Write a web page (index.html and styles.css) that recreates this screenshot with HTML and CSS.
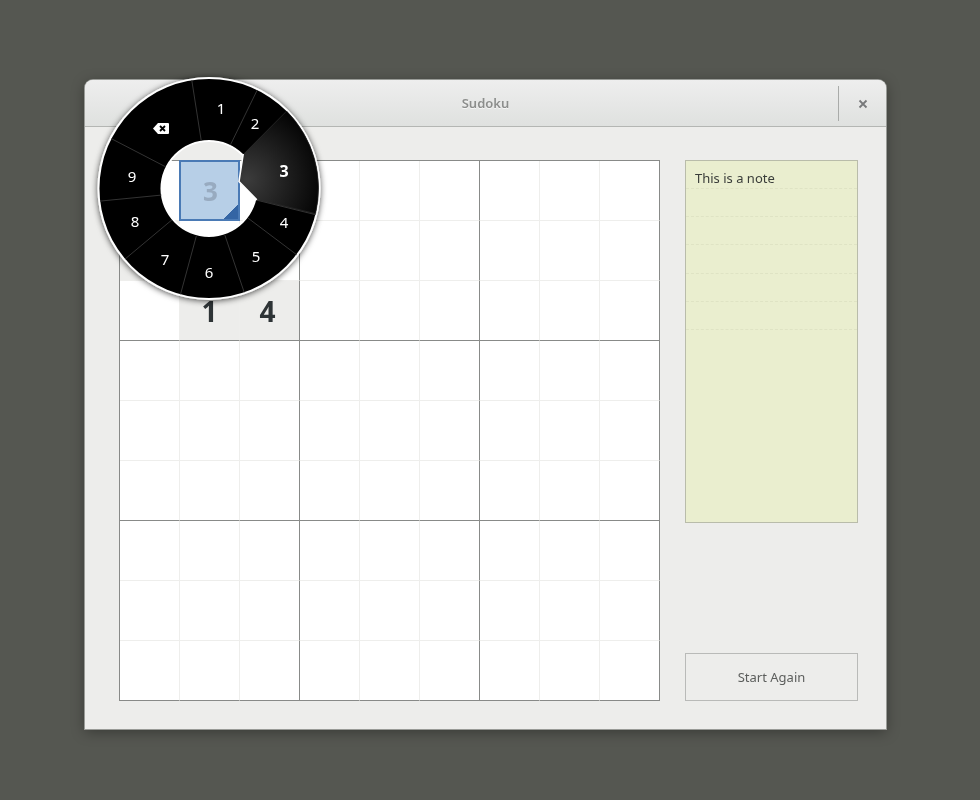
FILE: index.html
```html
<!DOCTYPE html>
<html lang="en">
<head>
<meta charset="utf-8">
<title>Sudoku</title>
<link rel="stylesheet" href="styles.css">
</head>
<body>
<div class="window">
  <header class="titlebar">
    <div class="title">Sudoku</div>
    <div class="controls">
      <span class="sep"></span>
      <svg class="close" width="10" height="10" viewBox="0 0 10 10"><path d="M1.5 1.5l7 7M8.5 1.5l-7 7" stroke="#77797a" stroke-width="1.8" fill="none"/></svg>
    </div>
  </header>
  <main class="content">
    <div class="board">
      <div class="c"></div><div class="c"></div><div class="c"></div><div class="c"></div><div class="c"></div><div class="c"></div><div class="c"></div><div class="c"></div><div class="c"></div>
      <div class="c hl"></div><div class="c"></div><div class="c"></div><div class="c"></div><div class="c"></div><div class="c"></div><div class="c"></div><div class="c"></div><div class="c"></div>
      <div class="c"></div><div class="c hl">1</div><div class="c hl shift">4</div><div class="c"></div><div class="c"></div><div class="c"></div><div class="c"></div><div class="c"></div><div class="c"></div>
      <div class="c"></div><div class="c"></div><div class="c"></div><div class="c"></div><div class="c"></div><div class="c"></div><div class="c"></div><div class="c"></div><div class="c"></div>
      <div class="c"></div><div class="c"></div><div class="c"></div><div class="c"></div><div class="c"></div><div class="c"></div><div class="c"></div><div class="c"></div><div class="c"></div>
      <div class="c"></div><div class="c"></div><div class="c"></div><div class="c"></div><div class="c"></div><div class="c"></div><div class="c"></div><div class="c"></div><div class="c"></div>
      <div class="c"></div><div class="c"></div><div class="c"></div><div class="c"></div><div class="c"></div><div class="c"></div><div class="c"></div><div class="c"></div><div class="c"></div>
      <div class="c"></div><div class="c"></div><div class="c"></div><div class="c"></div><div class="c"></div><div class="c"></div><div class="c"></div><div class="c"></div><div class="c"></div>
      <div class="c"></div><div class="c"></div><div class="c"></div><div class="c"></div><div class="c"></div><div class="c"></div><div class="c"></div><div class="c"></div><div class="c"></div>
    </div>
    <aside class="side">
      <div class="note">
        <div class="note-line">This is a note</div>
        <div class="note-line"></div>
        <div class="note-line"></div>
        <div class="note-line tall"></div>
        <div class="note-line"></div>
        <div class="note-line"></div>
      </div>
      <button class="again" type="button">Start Again</button>
    </aside>
  </main>
</div>

<div class="wheel">
  <div class="selected">3</div>
  <svg class="wheel-svg" width="240" height="240" viewBox="0 0 240 240">
    <defs>
      <radialGradient id="sel" gradientUnits="userSpaceOnUse" cx="38" cy="-9" r="82">
        <stop offset="0" stop-color="#3c3c3c"/>
        <stop offset="1" stop-color="#000"/>
      </radialGradient>
      <filter id="sh" x="-10%" y="-10%" width="120%" height="120%">
        <feDropShadow dx="0" dy="1" stdDeviation="3" flood-color="#000" flood-opacity=".7"/>
      </filter>
    </defs>
    <g transform="translate(120 119.5)">
      <path filter="url(#sh)" fill-rule="evenodd" fill="#fff" d="M0 -111.5A111.5 111.5 0 1 1 0 111.5A111.5 111.5 0 1 1 0 -111.5ZM0 -75A75 75 0 1 0 0 75A75 75 0 1 0 0 -75Z"/>
      <circle r="47.5" fill="none" stroke="#fff" stroke-width="2"/>
      <path fill-rule="evenodd" fill="#000" d="M0 -109.5A109.5 109.5 0 1 1 0 109.5A109.5 109.5 0 1 1 0 -109.5ZM0 -48.5A48.5 48.5 0 1 0 0 48.5A48.5 48.5 0 1 0 0 -48.5Z"/>
      <g stroke="#333" stroke-width="1">
        <path d="M-7.8 -48L-17.2 -108.2"/>
        <path d="M21.5 -43.8L48.2 -98.4"/>
        <path d="M47.5 11.6L106.7 26.2"/>
        <path d="M39 29.6L87.6 66.2"/>
        <path d="M15.8 46.4L35.2 103.8"/>
        <path d="M-12.6 47.3L-28.5 105.8"/>
        <path d="M-37 31.3L-84 70.6"/>
        <path d="M-47.6 6.6L-109 12.6"/>
        <path d="M-43.2 -21.6L-97.6 -49.8"/>
      </g>
      <path fill="url(#sel)" stroke="#333" stroke-width=".6" d="M34.5 -34.2L77.6 -77.4A109.5 109.5 0 0 1 106.6 25.2L47.5 11L30 -7Z"/>
      <path fill="none" stroke="#fff" stroke-width="1.6" d="M34.2 -34.5L30 -7L47.8 11.4"/>
    </g>
  </svg>
  <span class="seg s1">1</span>
  <span class="seg s2">2</span>
  <span class="seg s3">3</span>
  <span class="seg s4">4</span>
  <span class="seg s5">5</span>
  <span class="seg s6">6</span>
  <span class="seg s7">7</span>
  <span class="seg s8">8</span>
  <span class="seg s9">9</span>
  <svg class="bs" width="16" height="11" viewBox="0 0 16 11"><path fill="#fff" d="M5 0H15A1 1 0 0 1 16 1V10A1 1 0 0 1 15 11H5L0 5.5Z"/><path stroke="#000" stroke-width="1.8" fill="none" d="M7 3l5 5M12 3l-5 5"/></svg>
</div>
</body>
</html>
```

FILE: styles.css
```css
* { box-sizing: border-box; }
html, body { margin: 0; height: 800px; overflow: hidden; }
body {
  background: #555751;
  font-family: "Noto Sans", sans-serif;
  font-size: 13px;
  padding: 80px 94px 71px 85px;
  position: relative;
}
.window {
  width: 801px;
  height: 649px;
  background: #ededeb;
  border-radius: 8px 8px 0 0;
  box-shadow: 0 0 0 1px #999b97, 0 3px 14px rgba(0,0,0,.35);
  display: flex;
  flex-direction: column;
  will-change: transform;
}
.titlebar {
  height: 47px;
  flex: none;
  border-bottom: 1px solid #b4b6b3;
  border-radius: 8px 8px 0 0;
  background: linear-gradient(#eeeeee, #dfe1df);
  display: flex;
  align-items: center;
  justify-content: center;
  position: relative;
}
.title { color: #8c8e8c; font-weight: 600; font-size: 13px; text-shadow: 0 1px 0 #f6f6f6; }
.controls {
  position: absolute;
  right: 0; top: 6px; bottom: 5px;
  width: 48px;
  display: flex;
  align-items: center;
}
.sep { width: 1px; height: 35px; background: #a9aba9; }
.close { margin-left: 19px; }
.content {
  flex: 1;
  display: flex;
  padding: 33px 28px 28px 34px;
  gap: 25px;
}
.board {
  width: 541px;
  height: 541px;
  flex: none;
  border: 1px solid #888a88;
  border-width: 1px 0 0 1px;
  background: #fff;
  display: grid;
  grid-template-columns: repeat(9, 60px);
  grid-template-rows: repeat(9, 60px);
}
.c {
  border-right: 1px solid #eeeeec;
  border-bottom: 1px solid #eeeeec;
  display: flex;
  align-items: center;
  justify-content: center;
  font-size: 28px;
  font-weight: 700;
  color: #2e3436;
}
.c.hl { background: #ededeb; }
.c.shift { padding-right: 4px; }
.c:nth-child(3n) { border-right-color: #888a88; }
.c:nth-child(n+19):nth-child(-n+27),
.c:nth-child(n+46):nth-child(-n+54),
.c:nth-child(n+73) { border-bottom-color: #888a88; }
.side {
  flex: 1;
  display: flex;
  flex-direction: column;
  justify-content: space-between;
}
.note {
  height: 363px;
  border: 1px solid #b9bcaa;
  background: #eaeecf;
  color: #3a3d3a;
}
.note-line {
  height: 28px;
  line-height: 35px;
  padding-left: 9px;
  border-bottom: 1px dashed #dfe3c4;
}
.note-line.tall { height: 29px; }
.again {
  height: 48px;
  border: 1px solid #b9bab8;
  background: #ededeb;
  color: #5c5e5c;
  font: inherit;
  padding: 0;
}
.wheel {
  position: absolute;
  left: 89px;
  top: 69px;
  width: 240px;
  height: 240px;
  will-change: transform;
}
.wheel-svg { display: block; position: relative; }
.seg {
  position: absolute;
  width: 20px;
  margin-left: -10px;
  line-height: 20px;
  margin-top: -10px;
  text-align: center;
  color: #fff;
  font-size: 15px;
}
.s1 { left: 132px; top: 39px; }
.s2 { left: 166px; top: 54px; }
.s3 { left: 195px; top: 102px; font-weight: 700; font-size: 16px; }
.s4 { left: 195px; top: 153px; }
.s5 { left: 167px; top: 187px; }
.s6 { left: 120px; top: 203px; }
.s7 { left: 76px; top: 190px; }
.s8 { left: 46px; top: 152px; }
.s9 { left: 43px; top: 107px; }
.bs { position: absolute; left: 64px; top: 54px; }
.selected {
  position: absolute;
  left: 90px;
  top: 91px;
  width: 61px;
  height: 61px;
  padding-left: 2px;
  border: 2px solid #4a7ab5;
  background: #b7cfe7 linear-gradient(135deg, transparent 0 calc(100% - 10px), #3465a4 calc(100% - 10px));
  color: #98abc0;
  font-size: 26px;
  font-weight: 700;
  display: flex;
  align-items: center;
  justify-content: center;
}
```
